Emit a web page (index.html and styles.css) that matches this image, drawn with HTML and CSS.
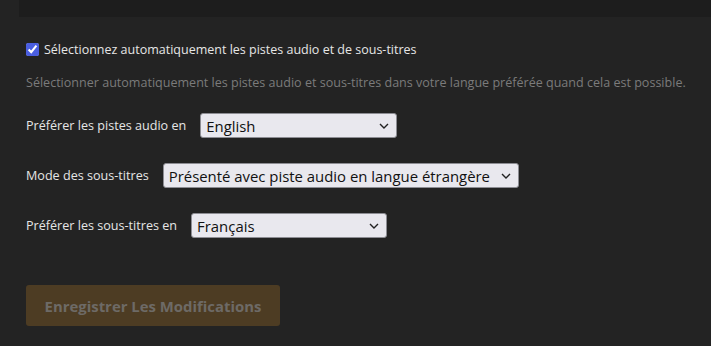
FILE: index.html
```html
<!DOCTYPE html>
<html lang="fr">
<head>
    <meta charset="utf-8">
    <link rel="stylesheet" href="styles.css">
    <title>Langues</title>
</head>
<body>
    <div class="top-panel"></div>
    <div class="settings">
        <label class="auto-row">
            <input type="checkbox" class="auto-check" checked>
            <span>Sélectionnez automatiquement les pistes audio et de sous-titres</span>
        </label>
        <p class="hint">Sélectionner automatiquement les pistes audio et sous-titres dans votre langue préférée quand cela est possible.</p>

        <div class="field">
            <span class="field-label">Préférer les pistes audio en</span>
            <div class="select-box w-audio">
                <select>
                    <option>English</option>
                </select>
                <svg class="chevron" viewBox="0 0 10 6" width="10" height="6"><path d="M1 1 L5 5 L9 1" fill="none" stroke="#222" stroke-width="1.4"/></svg>
            </div>
        </div>

        <div class="field">
            <span class="field-label">Mode des sous-titres</span>
            <div class="select-box w-mode">
                <select>
                    <option>Présenté avec piste audio en langue étrangère</option>
                </select>
                <svg class="chevron" viewBox="0 0 10 6" width="10" height="6"><path d="M1 1 L5 5 L9 1" fill="none" stroke="#222" stroke-width="1.4"/></svg>
            </div>
        </div>

        <div class="field">
            <span class="field-label">Préférer les sous-titres en</span>
            <div class="select-box w-subs">
                <select>
                    <option>Français</option>
                </select>
                <svg class="chevron" viewBox="0 0 10 6" width="10" height="6"><path d="M1 1 L5 5 L9 1" fill="none" stroke="#222" stroke-width="1.4"/></svg>
            </div>
        </div>

        <button class="save-btn" disabled>Enregistrer Les Modifications</button>
    </div>
</body>
</html>
```

FILE: styles.css
```css
* {
    margin: 0;
    padding: 0;
    box-sizing: border-box;
}
body {
    background-color: #232323;
    font-family: "Open Sans", "Noto Sans", sans-serif;
    color: #e6e6e6;
    width: 711px;
    height: 346px;
    overflow: hidden;
}
.top-panel {
    margin-left: 19px;
    height: 17px;
    background-color: #1d1d1d;
}
.settings {
    padding: 24px 0 0 26px;
}
.auto-row {
    display: flex;
    align-items: center;
    gap: 5px;
    font-size: 12.5px;
    height: 16px;
}
.auto-check {
    width: 13px;
    height: 13px;
    accent-color: #4a5ee0;
}
.hint {
    margin-top: 17px;
    font-size: 12.55px;
    color: #7b7b7b;
    white-space: nowrap;
}
.field {
    display: flex;
    align-items: center;
    gap: 14px;
    font-size: 12.6px;
    margin-top: 22px;
}
.field + .field {
    margin-top: 25px;
}
.field-label {
    white-space: nowrap;
}
.select-box {
    position: relative;
    height: 25px;
}
.select-box select {
    appearance: none;
    -webkit-appearance: none;
    width: 100%;
    height: 25px;
    background-color: #e9e8ee;
    border: 1px solid #8d8d93;
    border-radius: 3px;
    font-family: "Open Sans", "Noto Sans", sans-serif;
    font-size: 14.9px;
    color: #111;
    padding: 0 20px 0 5px;
}
.chevron {
    position: absolute;
    right: 8px;
    top: 10px;
    pointer-events: none;
}
.w-audio {
    width: 197px;
}
.w-mode {
    width: 356px;
}
.w-subs {
    width: 196px;
}
.save-btn {
    display: block;
    margin-top: 47px;
    width: 254px;
    height: 41px;
    border: 0;
    border-radius: 3px;
    background-color: #4d3c23;
    color: #6d6a66;
    font-family: "Open Sans", "Noto Sans", sans-serif;
    font-weight: 700;
    font-size: 14.9px;
}
```
